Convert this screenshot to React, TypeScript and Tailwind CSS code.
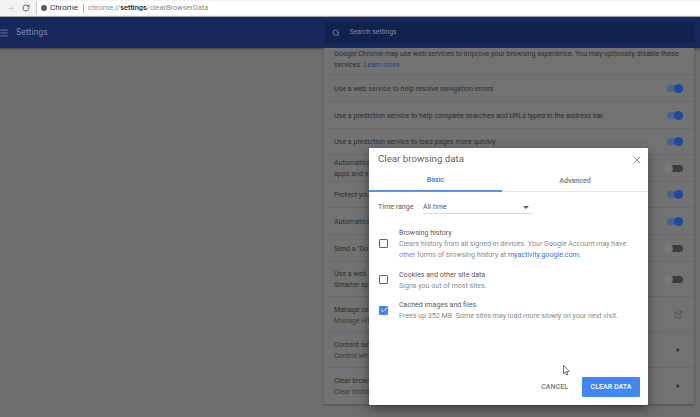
import React from 'react';
import { ArrowRight, RotateCw, Menu, Search, X, ExternalLink, Check, Play } from 'lucide-react';

const Toggle: React.FC<{ on?: boolean }> = ({ on }) =>
  on ? (
    <div className="relative w-[16px] h-[7px] rounded-full bg-[#4a6290]">
      <div className="absolute right-0 top-[-1px] w-[9px] h-[9px] rounded-full bg-[#1f4a9c]" />
    </div>
  ) : (
    <div className="relative w-[16px] h-[7px] rounded-full bg-[#3c3c3c]">
      <div className="absolute left-[-3px] top-[-1px] w-[9px] h-[9px] rounded-full bg-[#787878]" />
    </div>
  );

const rows: { h: string; lines: string[]; right?: 'on' | 'off' | 'link' | 'arrow' }[] = [
  { h: 'h-[27px]', lines: ['Use a web service to help resolve navigation errors'], right: 'on' },
  { h: 'h-[27px]', lines: ['Use a prediction service to help complete searches and URLs typed in the address bar'], right: 'on' },
  { h: 'h-[26px]', lines: ['Use a prediction service to load pages more quickly'], right: 'on' },
  { h: 'h-[27px]', lines: ['Automatically send some system information to Google', 'apps and sites'], right: 'off' },
  { h: 'h-[26px]', lines: ['Protect you and your device from dangerous sites'], right: 'on' },
  { h: 'h-[27px]', lines: ['Automatically send usage statistics to Google'], right: 'on' },
  { h: 'h-[27px]', lines: ['Send a "Do Not Track" request with your browsing traffic'], right: 'off' },
  { h: 'h-[35px]', lines: ['Use a web service to help resolve spelling errors', 'Smarter spell-checking by sending what you type'], right: 'off' },
  { h: 'h-[36px]', lines: ['Manage certificates', 'Manage HTTPS/SSL certificates and settings'], right: 'link' },
  { h: 'h-[35px]', lines: ['Content settings', 'Control what information websites can use'], right: 'arrow' },
  { h: 'h-[36px]', lines: ['Clear browsing data', 'Clear history, cookies, cache, and more'], right: 'arrow' },
];

const CheckRow: React.FC<{ checked?: boolean; title: string; children: React.ReactNode }> = ({ checked, title, children }) => (
  <div className="flex items-center">
    <div className="w-[20px] flex items-center">
      {checked ? (
        <div className="w-[9px] h-[9px] rounded-[1px] bg-[#4285f4] flex items-center justify-center">
          <Check size={8} strokeWidth={3} className="text-white" />
        </div>
      ) : (
        <div className="w-[9px] h-[9px] rounded-[1px] border-[1.5px] border-[#5f6368]" />
      )}
    </div>
    <div className="leading-[11px] whitespace-nowrap">
      <div className="text-[#5a5a5a]">{title}</div>
      <div className="text-[#8a8a8a]">{children}</div>
    </div>
  </div>
);

export default function App() {
  return (
    <div className="relative w-[700px] h-[417px] overflow-hidden bg-[#6d6d6d] text-[7.1px] font-['Roboto',sans-serif]">
      {/* Browser toolbar */}
      <div className="h-[17px] bg-[#f2f2f2] flex items-center border-b border-[#a8a8a8]">
        <ArrowRight size={9} className="ml-[6px] text-[#c4c4c4]" />
        <RotateCw size={8} strokeWidth={2.5} className="ml-[7px] text-[#555555]" />
        <div className="ml-[6px] flex-1 h-[14px] bg-white flex items-center border-l border-[#c8c8c8]">
          <div className="ml-[4px] w-[6px] h-[6px] rounded-full bg-[#5a5a5a]" />
          <span className="ml-[3px] text-[8px] text-[#333333]">Chrome</span>
          <span className="ml-[5px] w-px h-[9px] bg-[#b0b0b0]" />
          <span className="ml-[4px] text-[7.4px] text-[#8a8a8a]">
            chrome://<span className="text-[#222222] font-medium">settings</span>/clearBrowserData
          </span>
        </div>
      </div>

      {/* Settings header */}
      <div className="h-[31px] bg-[#16285c] flex items-center shadow-[0_1px_2px_rgba(0,0,0,0.4)]">
        <Menu size={10} className="text-[#7f8aa8] ml-[-1px]" />
        <span className="ml-[7px] text-[8.7px] text-[#7f8aa8]">Settings</span>
        <div className="ml-[277px] w-[370px] h-[21px] rounded-[1px] bg-[#12224e] flex items-center">
          <Search size={8} strokeWidth={2.5} className="ml-[7px] text-[#7f8aa8]" />
          <span className="ml-[10px] text-[6.8px] text-[#7f8aa8]">Search settings</span>
        </div>
      </div>

      {/* Settings card */}
      <div className="ml-[324px] w-[370px] bg-[#727272] text-[#2e2e2e] shadow-[0_1px_2px_rgba(0,0,0,0.3)]">
        <div className="h-[27px] px-[10px] leading-[11px] border-b border-[#6a6a6a] whitespace-nowrap">
          <div>Google Chrome may use web services to improve your browsing experience. You may optionally disable these</div>
          <div>services. <span className="text-[#2b3f7c]">Learn more</span></div>
        </div>
        {rows.map((r, i) => (
          <div key={i} className={`${r.h} pl-[10px] pr-[11px] flex items-center justify-between border-b border-[#6a6a6a] last:border-b-0`}>
            <div className="leading-[11px]">
              {r.lines.map((l, j) => (
                <div key={j} className={j === 1 && r.right !== 'off' ? 'text-[#3c3c3c]' : ''}>{l}</div>
              ))}
            </div>
            <div className="w-[16px] flex justify-end">
              {r.right === 'on' && <Toggle on />}
              {r.right === 'off' && <Toggle />}
              {r.right === 'link' && <ExternalLink size={9} className="text-[#4c4c4c]" />}
              {r.right === 'arrow' && <Play size={4} className="text-[#303030] fill-[#303030] mr-[3px]" />}
            </div>
          </div>
        ))}
      </div>

      {/* Clear browsing data dialog */}
      <div className="absolute left-[369px] top-[148px] w-[279px] h-[257px] bg-white rounded-[1px] shadow-[0_4px_12px_rgba(0,0,0,0.45)] flex flex-col">
        <div className="h-[23px] flex items-center justify-between pl-[9px] pr-[5px]">
          <span className="text-[9.7px] text-[#5f5f5f]">Clear browsing data</span>
          <X size={12} strokeWidth={1.5} className="text-[#666666]" />
        </div>
        <div className="h-[21px] flex border-b border-[#e4e4e4] font-medium">
          <div className="w-[133px] flex items-center justify-center text-[#4a73c9] border-b-2 border-[#5b8ff0] mb-[-1px]">Basic</div>
          <div className="flex-1 flex items-center justify-center text-[#777777]">Advanced</div>
        </div>
        <div className="mt-[9px] ml-[9px] flex items-center text-[#5a5a5a] h-[13px]">
          <span className="w-[45px]">Time range</span>
          <div className="w-[109px] h-[13px] flex items-center justify-between border-b border-[#d8d8d8] pr-[3px]">
            <span>All time</span>
            <span className="w-0 h-0 border-x-[3px] border-x-transparent border-t-[3px] border-t-[#666666]" />
          </div>
        </div>
        <div className="mt-[13px] ml-[10px] flex flex-col gap-[8.5px]">
          <CheckRow title="Browsing history">
            Clears history from all signed-in devices. Your Google Account may have
            <br />
            other forms of browsing history at <span className="text-[#3b6fd4]">myactivity.google.com.</span>
          </CheckRow>
          <CheckRow title="Cookies and other site data">Signs you out of most sites.</CheckRow>
          <CheckRow checked title="Cached images and files">
            Frees up 352 MB. Some sites may load more slowly on your next visit.
          </CheckRow>
        </div>
        <div className="mt-auto mb-[8px] mr-[8px] flex items-center justify-end font-medium">
          <span className="text-[#777777] mr-[14px]">CANCEL</span>
          <div className="w-[58px] h-[20px] rounded-[1px] bg-[#4285f4] text-white flex items-center justify-center">CLEAR DATA</div>
        </div>
      </div>

      {/* Mouse pointer */}
      <svg className="absolute left-[563px] top-[365px]" width="7" height="11" viewBox="0 0 7 11">
        <path d="M0.5 0.5 V8.5 L2.4 6.9 L3.8 10 L5 9.4 L3.7 6.5 L6.2 6.3 Z" fill="#fff" stroke="#333" strokeWidth="0.7" />
      </svg>
    </div>
  );
}
